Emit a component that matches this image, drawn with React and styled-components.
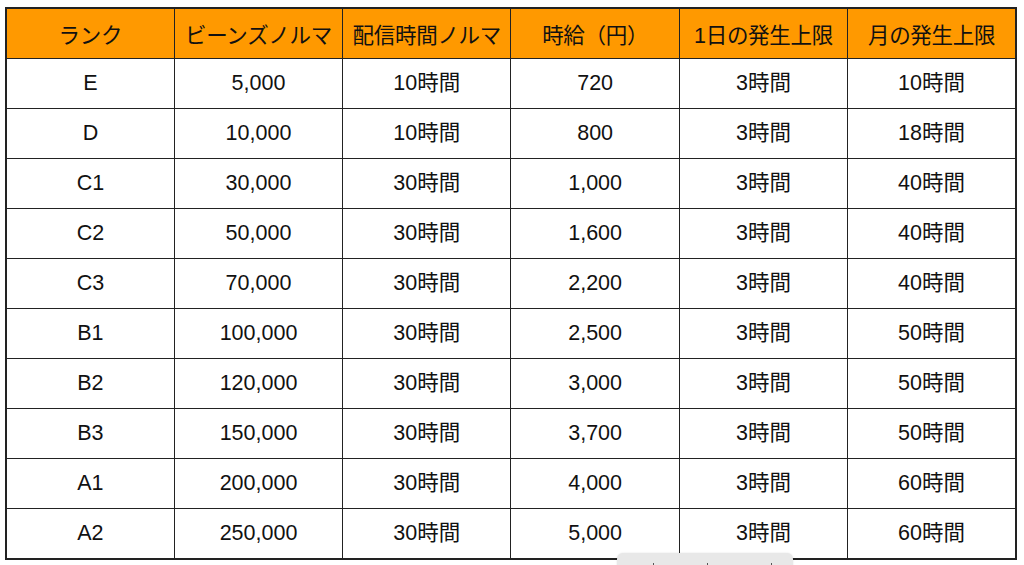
import React from "react";
import styled, { createGlobalStyle } from "styled-components";

const Global = createGlobalStyle`
  html, body { margin: 0; padding: 0; background: #ffffff; }
  body { width: 1024px; height: 565px; overflow: hidden; font-family: "Liberation Sans", "Noto Sans CJK JP", sans-serif; }
`;

const Page = styled.div`
  position: relative;
  width: 1024px;
  height: 565px;
  padding: 7px 0 0 5px;
  box-sizing: border-box;
`;

const Table = styled.table`
  border-collapse: collapse;
  table-layout: fixed;
  width: 1012px;
  border: 2px solid #222;
`;

const Th = styled.th`
  height: 49px;
  padding: 0;
  background: #ff9900;
  border: 1px solid #222;
  font-weight: 400;
  font-size: 21.5px;
  color: #111;
  text-align: center;
  vertical-align: middle;
  white-space: nowrap;
  letter-spacing: -0.3px;
`;

const Td = styled.td`
  box-sizing: border-box;
  height: 50px;
  padding: 12px 0 0;
  border: 1px solid #222;
  font-size: 21.5px;
  line-height: 24px;
  color: #111;
  text-align: center;
  vertical-align: baseline;
  white-space: nowrap;
`;

const Popup = styled.div`
  position: absolute;
  left: 617px;
  top: 553px;
  width: 176px;
  height: 30px;
  box-sizing: border-box;
  padding: 10px 0 0 36px;
  display: flex;
  align-items: flex-start;
  gap: 53px;
  background: #e8e8e8;
  border-radius: 6px;
  box-shadow: 0 0 2px rgba(0, 0, 0, 0.12);
`;

const Tick = styled.span`
  width: 1px;
  height: 3px;
  background: #555;
  & + & + & { margin-left: 10px; }
`;

const headers = ["ランク", "ビーンズノルマ", "配信時間ノルマ", "時給（円）", "1日の発生上限", "月の発生上限"];

const rows = [
  ["E", "5,000", "10時間", "720", "3時間", "10時間"],
  ["D", "10,000", "10時間", "800", "3時間", "18時間"],
  ["C1", "30,000", "30時間", "1,000", "3時間", "40時間"],
  ["C2", "50,000", "30時間", "1,600", "3時間", "40時間"],
  ["C3", "70,000", "30時間", "2,200", "3時間", "40時間"],
  ["B1", "100,000", "30時間", "2,500", "3時間", "50時間"],
  ["B2", "120,000", "30時間", "3,000", "3時間", "50時間"],
  ["B3", "150,000", "30時間", "3,700", "3時間", "50時間"],
  ["A1", "200,000", "30時間", "4,000", "3時間", "60時間"],
  ["A2", "250,000", "30時間", "5,000", "3時間", "60時間"],
];

export default function App() {
  return (
    <Page>
      <Global />
      <Table>
        <thead>
          <tr>
            {headers.map((h) => (
              <Th key={h}>{h}</Th>
            ))}
          </tr>
        </thead>
        <tbody>
          {rows.map((r) => (
            <tr key={r[0]}>
              {r.map((c, i) => (
                <Td key={i}>{c}</Td>
              ))}
            </tr>
          ))}
        </tbody>
      </Table>
      <Popup>
        <Tick />
        <Tick />
        <Tick />
      </Popup>
    </Page>
  );
}
